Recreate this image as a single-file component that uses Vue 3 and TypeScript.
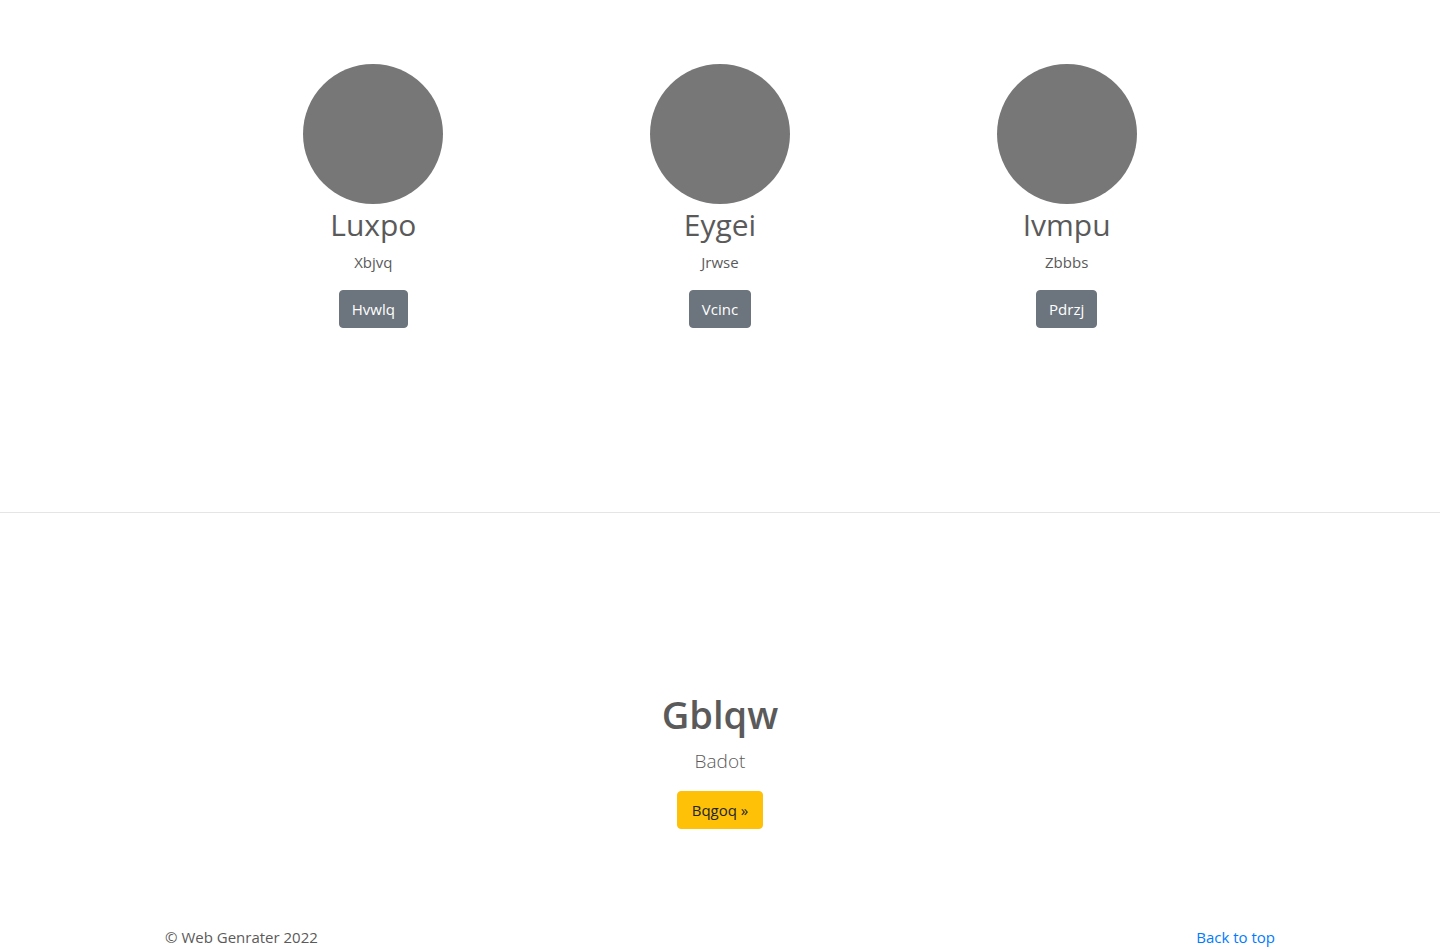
<script setup lang="ts">
interface Feature {
  title: string
  text: string
  action: string
}

const features: Feature[] = [
  { title: 'Luxpo', text: 'Xbjvq', action: 'Hvwlq' },
  { title: 'Eygei', text: 'Jrwse', action: 'Vcinc' },
  { title: 'Ivmpu', text: 'Zbbbs', action: 'Pdrzj' },
]
</script>

<template>
  <main class="page">
    <section class="features">
      <article v-for="item in features" :key="item.title" class="feature">
        <div class="avatar"></div>
        <h2>{{ item.title }}</h2>
        <p>{{ item.text }}</p>
        <a class="btn secondary" href="#">{{ item.action }}</a>
      </article>
    </section>
    <hr />
    <section class="callout">
      <h1>Gblqw</h1>
      <p class="lead">Badot</p>
      <a class="btn warning" href="#">Bqgoq »</a>
    </section>
    <footer class="footer">
      <p>© Web Genrater 2022</p>
      <a href="#">Back to top</a>
    </footer>
  </main>
</template>

<style>
body {
  margin: 0;
  background: #fff;
}
</style>

<style scoped>
.page {
  font-family: "Segoe UI", "Open Sans", "Noto Sans", sans-serif;
  font-size: 15px;
  line-height: 24px;
  color: #5a5a5a;
}
.features {
  display: grid;
  grid-template-columns: repeat(3, 1fr);
  max-width: 1040px;
  margin: 0 auto;
  padding: 64px 0 184px;
}
.feature,
.callout {
  display: flex;
  flex-direction: column;
  align-items: center;
  text-align: center;
}
.avatar {
  width: 140px;
  height: 140px;
  border-radius: 50%;
  background: #777;
}
h2 {
  margin: 0 0 4px;
  font-size: 30px;
  font-weight: 400;
  line-height: 42px;
}
p {
  margin: 0;
}
.feature p {
  margin-bottom: 16px;
}
.btn {
  box-sizing: border-box;
  padding: 6px 12px;
  border: 1px solid transparent;
  border-radius: 4px;
  text-decoration: none;
}
.secondary {
  background: #6c757d;
  border-color: #6c757d;
  color: #fff;
}
.warning {
  padding: 6px 14px;
  background: #ffc107;
  border-color: #ffc107;
  color: #212529;
}
hr {
  margin: 0;
  border: 0;
  border-top: 1px solid #e5e5e5;
}
.callout {
  padding: 176px 16px 96px;
}
h1 {
  margin: 0 0 8px;
  font-size: 38px;
  font-weight: 600;
  line-height: 50px;
}
.lead {
  margin-bottom: 16px;
  font-size: 19px;
  font-weight: 300;
  line-height: 28px;
}
.footer {
  display: flex;
  justify-content: space-between;
  max-width: 1110px;
  margin: 0 auto;
}
.footer a {
  color: #007bff;
  text-decoration: none;
}
</style>
